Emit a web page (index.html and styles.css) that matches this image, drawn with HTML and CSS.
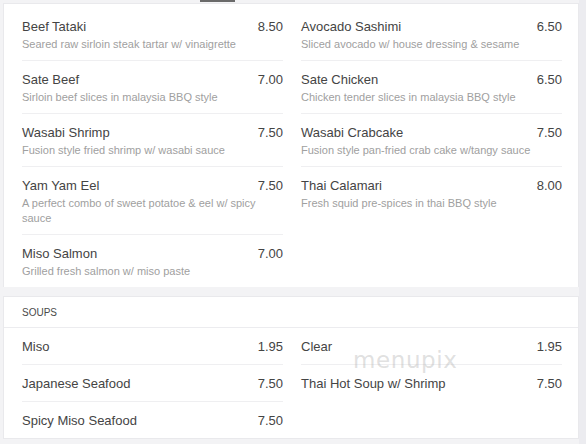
FILE: index.html
```html
<!DOCTYPE html>
<html>
<head>
<meta charset="utf-8">
<link rel="stylesheet" href="styles.css">
</head>
<body>
<div class="page">
  <main class="main">
    <div class="tabs"><span class="tab-active"></span></div>
    <section class="card card-top">
      <div class="grid">
        <div class="col">
          <div class="item"><div class="line"><span class="name">Beef Tataki</span><span class="price">8.50</span></div><p class="desc">Seared raw sirloin steak tartar w/ vinaigrette</p></div>
          <div class="item"><div class="line"><span class="name">Sate Beef</span><span class="price">7.00</span></div><p class="desc">Sirloin beef slices in malaysia BBQ style</p></div>
          <div class="item"><div class="line"><span class="name">Wasabi Shrimp</span><span class="price">7.50</span></div><p class="desc">Fusion style fried shrimp w/ wasabi sauce</p></div>
          <div class="item"><div class="line"><span class="name">Yam Yam Eel</span><span class="price">7.50</span></div><p class="desc">A perfect combo of sweet potatoe &amp; eel w/ spicy sauce</p></div>
          <div class="item"><div class="line"><span class="name">Miso Salmon</span><span class="price">7.00</span></div><p class="desc">Grilled fresh salmon w/ miso paste</p></div>
        </div>
        <div class="col">
          <div class="item"><div class="line"><span class="name">Avocado Sashimi</span><span class="price">6.50</span></div><p class="desc">Sliced avocado w/ house dressing &amp; sesame</p></div>
          <div class="item"><div class="line"><span class="name">Sate Chicken</span><span class="price">6.50</span></div><p class="desc">Chicken tender slices in malaysia BBQ style</p></div>
          <div class="item"><div class="line"><span class="name">Wasabi Crabcake</span><span class="price">7.50</span></div><p class="desc">Fusion style pan-fried crab cake w/tangy sauce</p></div>
          <div class="item"><div class="line"><span class="name">Thai Calamari</span><span class="price">8.00</span></div><p class="desc">Fresh squid pre-spices in thai BBQ style</p></div>
        </div>
      </div>
    </section>
    <section class="card card-soups">
      <h2 class="section-title">SOUPS</h2>
      <div class="grid">
        <div class="col">
          <div class="item short"><div class="line"><span class="name">Miso</span><span class="price">1.95</span></div></div>
          <div class="item short"><div class="line"><span class="name">Japanese Seafood</span><span class="price">7.50</span></div></div>
          <div class="item short"><div class="line"><span class="name">Spicy Miso Seafood</span><span class="price">7.50</span></div></div>
        </div>
        <div class="col">
          <div class="item short"><div class="line"><span class="name">Clear</span><span class="price">1.95</span></div></div>
          <div class="item short"><div class="line"><span class="name">Thai Hot Soup w/ Shrimp</span><span class="price">7.50</span></div></div>
        </div>
      </div>
      <div class="watermark">menupix</div>
    </section>
  </main>
  <div class="strip"></div>
</div>
</body>
</html>
```

FILE: styles.css
```css
html, body {
  margin: 0;
  padding: 0;
}
body {
  background: #f3f3f5;
  font-family: "Liberation Sans", Arial, sans-serif;
  color: #333;
  width: 586px;
  height: 444px;
  overflow: hidden;
}
.page {
  display: flex;
  height: 444px;
}
.main {
  width: 576px;
  margin-left: 3px;
}
.strip {
  flex: 1;
  background: #ececf0;
}
.tabs {
  height: 3px;
}
.tab-active {
  display: block;
  margin-left: 197px;
  width: 35px;
  height: 2px;
  background: #6a6a6a;
}
.card {
  background: #fff;
  border: 1px solid #e9e9ec;
  box-sizing: border-box;
}
.card-top {
  padding: 4px 16px 0 18px;
  border-bottom: none;
}
.card-soups {
  margin-top: 9px;
  position: relative;
}
.grid {
  display: grid;
  grid-template-columns: 261px 261px;
  column-gap: 18px;
}
.card-soups .grid {
  padding: 0 16px 0 18px;
}
.col {
  display: flex;
  flex-direction: column;
}
.item {
  padding: 9px 0 8px;
  border-bottom: 1px solid #efeff1;
}
.item:last-child {
  border-bottom: none;
}
.item.short {
  padding: 9px 0 7px;
}
.line {
  display: flex;
  justify-content: space-between;
  font-size: 13px;
  line-height: 20px;
  color: #444;
}
.desc {
  margin: 0;
  font-size: 11px;
  line-height: 15px;
  color: #a0a0a0;
}
.section-title {
  margin: 0;
  padding: 8px 18px 7px;
  font-size: 10px;
  line-height: 15px;
  font-weight: normal;
  color: #4a4a4a;
  border-bottom: 1px solid #ececef;
}
.watermark {
  position: absolute;
  left: 349px;
  top: 50px;
  font-family: "DejaVu Sans", sans-serif;
  font-size: 23px;
  letter-spacing: 0.6px;
  color: rgba(175, 175, 175, 0.4);
}
```
